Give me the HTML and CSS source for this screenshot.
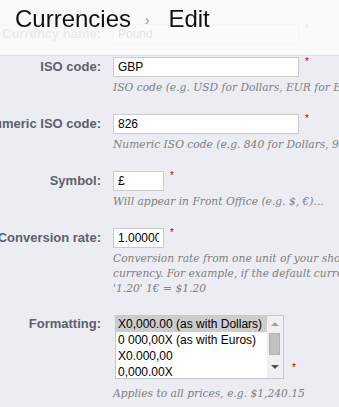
FILE: index.html
```html
<!DOCTYPE html>
<html lang="en">

<head>
    <meta charset="UTF-8">
    <meta name="viewport" content="width=device-width, initial-scale=1.0">
    <title>Currencies - Edit</title>
    <link rel="stylesheet" href="styles.css">
</head>

<body>
    <!-- 顶部标题栏 -->
    <div class="toolbar">
        <h2>Currencies <span class="sep">&rsaquo;</span> Edit</h2>
    </div>

    <!-- 表单 -->
    <form class="form">
        <div class="row first">
            <label>Currency name:</label>
            <div class="field">
                <div class="line">
                    <input class="text wide" type="text" value="Pound">
                    <sup class="req">*</sup>
                </div>
            </div>
        </div>

        <div class="row">
            <label>ISO code:</label>
            <div class="field">
                <div class="line">
                    <input class="text wide" type="text" value="GBP">
                    <sup class="req">*</sup>
                </div>
                <p class="help">ISO code (e.g. USD for Dollars, EUR for Euros)...</p>
            </div>
        </div>

        <div class="row">
            <label>Numeric ISO code:</label>
            <div class="field">
                <div class="line">
                    <input class="text wide" type="text" value="826">
                    <sup class="req">*</sup>
                </div>
                <p class="help">Numeric ISO code (e.g. 840 for Dollars, 978 for Euros)...</p>
            </div>
        </div>

        <div class="row">
            <label>Symbol:</label>
            <div class="field">
                <div class="line">
                    <input class="text small" type="text" value="£">
                    <sup class="req">*</sup>
                </div>
                <p class="help">Will appear in Front Office (e.g. $, €)...</p>
            </div>
        </div>

        <div class="row">
            <label>Conversion rate:</label>
            <div class="field">
                <div class="line">
                    <input class="text small" type="text" value="1.000000">
                    <sup class="req">*</sup>
                </div>
                <p class="help">Conversion rate from one unit of your shop's default currency to this<br>
                    currency. For example, if the default currency is euros and this currency is dollars, type<br>
                    '1.20' 1€ = $1.20</p>
            </div>
        </div>

        <div class="row">
            <label class="tall">Formatting:</label>
            <div class="field">
                <div class="line bottom">
                    <div class="listbox">
                        <ul class="options">
                            <li class="selected">X0,000.00 (as with Dollars)</li>
                            <li>0 000,00X (as with Euros)</li>
                            <li>X0.000,00</li>
                            <li>0,000.00X</li>
                        </ul>
                        <div class="scroll">
                            <span class="arrow up"></span>
                            <span class="thumb"></span>
                            <span class="arrow down"></span>
                        </div>
                    </div>
                    <sup class="req">*</sup>
                </div>
                <p class="help spaced">Applies to all prices, e.g. $1,240.15</p>
            </div>
        </div>
    </form>
</body>

</html>
```

FILE: styles.css
```css
* {
    margin: 0;
    padding: 0;
}

li {
    list-style: none;
}

body {
    background-color: #ebedf3;
    font-family: "Liberation Sans", Arial, sans-serif;
    font-size: 13px;
    overflow: hidden;
}

/* 标题栏 盖在表单上面 */
.toolbar {
    position: fixed;
    top: 0;
    left: 0;
    right: 0;
    height: 55px;
    background-color: rgba(250, 250, 251, 0.9);
    border-bottom: 1px solid #dfe0e4;
    z-index: 10;
}

.toolbar h2 {
    padding: 5px 0 0 15px;
    font-size: 24px;
    font-weight: normal;
    line-height: 28px;
    color: #111;
}

.toolbar .sep {
    display: inline-block;
    margin: 0 12px 0 7px;
    font-size: 15px;
    color: #999;
    vertical-align: 2px;
}

.form {
    margin-left: -139px;
    padding-top: 24px;
}

.row {
    display: flex;
    margin-bottom: 19px;
}

.row.first {
    margin-bottom: 13px;
}

.row label {
    flex: none;
    width: 252px;
    padding-right: 12px;
    box-sizing: border-box;
    text-align: right;
    font-weight: bold;
    line-height: 20px;
    color: #5d5f6c;
    white-space: nowrap;
}

.row label.tall {
    line-height: 18px;
}

.field {
    flex: none;
    width: 600px;
}

.line {
    display: flex;
    align-items: flex-start;
}

.line.bottom {
    align-items: flex-end;
}

.text {
    display: block;
    height: 20px;
    box-sizing: border-box;
    border: 1px solid #ccc;
    padding: 0 4px;
    background-color: #fff;
    font-family: "Liberation Sans", Arial, sans-serif;
    font-size: 12px;
    color: #000;
    outline: none;
}

.text.wide {
    width: 186px;
}

.text.small {
    width: 51px;
}

.req {
    margin-left: 6px;
    font-size: 10px;
    line-height: 10px;
    color: #c00;
}

.line.bottom .req {
    margin-left: 8px;
    margin-bottom: 6px;
}

.help {
    margin-top: 3px;
    font-family: "DejaVu Serif", Georgia, serif;
    font-style: italic;
    font-size: 10.7px;
    line-height: 15px;
    color: #808080;
    white-space: nowrap;
}

.help.spaced {
    margin-top: 7px;
}

/* 下拉列表 */
.listbox {
    display: flex;
    width: 169px;
    height: 64px;
    margin-left: 2px;
    box-sizing: border-box;
    border: 1px solid #c8c8c8;
    background-color: #fff;
}

.options {
    flex: 1;
    overflow: hidden;
}

.options li {
    height: 16px;
    padding-left: 2px;
    font-size: 12px;
    line-height: 16px;
    white-space: nowrap;
    color: #000;
}

.options li.selected {
    background-color: #cdcdcd;
}

.scroll {
    position: relative;
    flex: none;
    width: 16px;
    background-color: #f0f0f0;
}

.thumb {
    position: absolute;
    left: 2px;
    top: 17px;
    width: 11px;
    height: 22px;
    background-color: #c1c1c1;
    border: 1px solid #b0b0b0;
    box-sizing: border-box;
}

.arrow {
    position: absolute;
    left: 4px;
    width: 0;
    height: 0;
    border-left: 4px solid transparent;
    border-right: 4px solid transparent;
}

.arrow.up {
    top: 6px;
    border-bottom: 4px solid #a3a3a3;
}

.arrow.down {
    bottom: 9px;
    border-top: 4px solid #505050;
}
```
